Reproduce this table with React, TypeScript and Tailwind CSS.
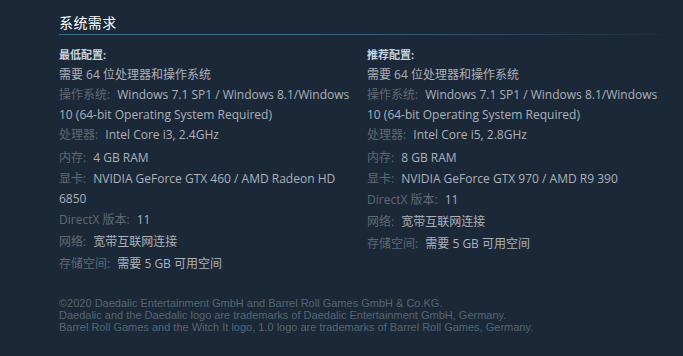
import React from "react";

type Req = { label?: string; value: string };

const minimum: Req[] = [
  { value: "需要 64 位处理器和操作系统" },
  { label: "操作系统:", value: "Windows 7.1 SP1 / Windows 8.1/Windows 10 (64-bit Operating System Required)" },
  { label: "处理器:", value: "Intel Core i3, 2.4GHz" },
  { label: "内存:", value: "4 GB RAM" },
  { label: "显卡:", value: "NVIDIA GeForce GTX 460 / AMD Radeon HD 6850" },
  { label: "DirectX 版本:", value: "11" },
  { label: "网络:", value: "宽带互联网连接" },
  { label: "存储空间:", value: "需要 5 GB 可用空间" },
];

const recommended: Req[] = [
  { value: "需要 64 位处理器和操作系统" },
  { label: "操作系统:", value: "Windows 7.1 SP1 / Windows 8.1/Windows 10 (64-bit Operating System Required)" },
  { label: "处理器:", value: "Intel Core i5, 2.8GHz" },
  { label: "内存:", value: "8 GB RAM" },
  { label: "显卡:", value: "NVIDIA GeForce GTX 970 / AMD R9 390" },
  { label: "DirectX 版本:", value: "11" },
  { label: "网络:", value: "宽带互联网连接" },
  { label: "存储空间:", value: "需要 5 GB 可用空间" },
];

// spacing under each row, as measured from the screenshot
const rowGap = ["mb-0", "mb-0", "mb-[3px]", "mb-[1px]", "mb-[1px]", "mb-[2px]", "mb-[2px]", "mb-0"];

function ReqColumn({ title, items }: { title: string; items: Req[] }) {
  return (
    <div className="w-[300px]">
      <p className="text-[11px] font-bold leading-[14px] text-[#c6d4df] mb-[3px]">{title}</p>
      <ul className="text-[12px] leading-[20px] text-[#acb2b8]">
        {items.map((item, i) => (
          <li key={i} className={rowGap[i]}>
            {item.label && <span className="text-[#5f6a75] mr-[4px]">{item.label} </span>}
            {item.value}
          </li>
        ))}
      </ul>
    </div>
  );
}

export default function App() {
  return (
    <div
      className="w-full h-[356px] bg-[#1b2838] pl-[59px] pt-[14px] overflow-hidden"
      style={{ fontFamily: '"Open Sans", "Noto Sans CJK SC", sans-serif' }}
    >
      <h2 className="text-[14px] leading-[18px] tracking-[0.03em] text-white pb-[3px] bg-[linear-gradient(to_right,#3b6e8c_0%,#3b6e8c_40%,rgba(59,110,140,0)_100%)] bg-no-repeat bg-bottom bg-[length:100%_1px]">
        系统需求
      </h2>
      <div className="flex gap-[8px] mt-[13px]">
        <ReqColumn title="最低配置:" items={minimum} />
        <ReqColumn title="推荐配置:" items={recommended} />
      </div>
      <div
        className="mt-[23px] text-[11px] leading-[12px] text-[#556772]"
        style={{ fontFamily: '"Liberation Sans", Arial, sans-serif' }}
      >
        <p>©2020 Daedalic Entertainment GmbH and Barrel Roll Games GmbH &amp; Co.KG.</p>
        <p>Daedalic and the Daedalic logo are trademarks of Daedalic Entertainment GmbH, Germany.</p>
        <p>Barrel Roll Games and the Witch It logo, 1.0 logo are trademarks of Barrel Roll Games, Germany.</p>
      </div>
    </div>
  );
}
